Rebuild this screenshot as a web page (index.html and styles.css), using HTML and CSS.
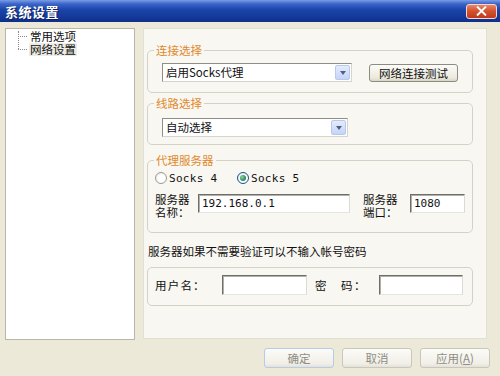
FILE: index.html
```html
<!DOCTYPE html>
<html lang="zh-CN">
<head>
    <meta charset="UTF-8">
    <title>系统设置</title>
    <link rel="stylesheet" href="styles.css">
</head>
<body>
    <div class="window">
        <div class="titlebar">
            <span class="title">系统设置</span>
            <span class="close">
                <svg width="11" height="10" viewBox="0 0 11 10"><path d="M1 0.5 L10 9.5 M10 0.5 L1 9.5" stroke="#fff" stroke-width="1.9"/></svg>
            </span>
        </div>

        <div class="main">
            <div class="tree">
                <div class="nodes">
                    <div class="node"><span class="branch"></span><span class="node-label">常用选项</span></div>
                    <div class="node"><span class="branch"></span><span class="node-label selected">网络设置</span></div>
                </div>
            </div>

            <div class="panel">
                <fieldset class="group g-conn">
                    <legend>连接选择</legend>
                    <div class="row indent">
                        <div class="combo combo-conn">
                            <span class="combo-text">启用Socks代理</span>
                            <span class="combo-btn"><span class="arrow"></span></span>
                        </div>
                        <button class="btn btn-test">网络连接测试</button>
                    </div>
                </fieldset>

                <fieldset class="group g-line">
                    <legend>线路选择</legend>
                    <div class="row indent">
                        <div class="combo combo-line">
                            <span class="combo-text">自动选择</span>
                            <span class="combo-btn"><span class="arrow"></span></span>
                        </div>
                    </div>
                </fieldset>

                <fieldset class="group g-proxy">
                    <legend>代理服务器</legend>
                    <div class="row radios">
                        <label class="radio-item first"><span class="radio"></span>Socks 4</label>
                        <label class="radio-item"><span class="radio checked"></span>Socks 5</label>
                    </div>
                    <div class="row server">
                        <span class="two-line name-label"><span class="line">服务器</span><span class="line">名称：</span></span>
                        <span class="field field-host">192.168.0.1</span>
                        <span class="two-line port-label"><span class="line">服务器</span><span class="line">端口：</span></span>
                        <span class="field field-port">1080</span>
                    </div>
                </fieldset>

                <div class="note">服务器如果不需要验证可以不输入帐号密码</div>

                <fieldset class="group g-auth">
                    <div class="row auth">
                        <span class="user-label">用户名：</span>
                        <span class="field field-user"></span>
                        <span class="pass-label">密　码：</span>
                        <span class="field field-pass"></span>
                    </div>
                </fieldset>
            </div>
        </div>

        <div class="footer">
            <button class="btn btn-foot btn-ok">确定</button>
            <button class="btn btn-foot">取消</button>
            <button class="btn btn-foot">应用(<u>A</u>)</button>
        </div>
    </div>
</body>
</html>
```

FILE: styles.css
```css
* {
    box-sizing: border-box;
}
body {
    margin: 0;
    width: 500px;
    height: 376px;
    overflow: hidden;
    background: #ece9d8;
    font-family: "Noto Sans CJK SC", "DejaVu Sans", sans-serif;
    font-size: 11.5px;
    color: #111;
}
.window {
    width: 500px;
    height: 376px;
    display: flex;
    flex-direction: column;
}

/* title bar */
.titlebar {
    height: 22px;
    display: flex;
    align-items: center;
    justify-content: space-between;
    padding: 0 3px 0 5px;
    background: linear-gradient(#7a9de6 0, #3a64c8 18%, #1b44a8 45%, #143a9a 75%, #0f2f88 100%);
}
.title {
    color: #fff;
    font-weight: bold;
    font-size: 13px;
    letter-spacing: 0.5px;
    text-shadow: 1px 1px 0 #0b1e60;
}
.close {
    width: 31px;
    height: 15px;
    display: flex;
    align-items: center;
    justify-content: center;
    border: 1px solid #f3d8cf;
    border-radius: 3px;
    background: linear-gradient(#e8866a, #d4532f 45%, #c0391b);
}

/* body */
.main {
    height: 318px;
    display: flex;
    padding: 6px 13px 0 5px;
    gap: 8px;
}
.tree {
    width: 130px;
    height: 312px;
    background: #fff;
    border: 1px solid #b9b7a9;
    padding: 1px 0 0 12px;
}
.nodes {
    position: relative;
}
.nodes::before {
    content: "";
    position: absolute;
    left: 0;
    top: 1px;
    height: 18px;
    border-left: 1px dotted #8a8a8a;
}
.node {
    height: 13px;
    display: flex;
    align-items: center;
}
.branch {
    width: 9px;
    border-top: 1px dotted #8a8a8a;
    margin-right: 2px;
}
.node-label {
    display: block;
    height: 13px;
    line-height: 13px;
    padding: 0 1px;
    color: #111;
}
.node-label.selected {
    background: #ecebe4;
}

.panel {
    width: 344px;
    height: 311px;
    background: #f8f7f2;
    border: 1px solid #e2e0d4;
    padding: 14px 13px 0 3px;
}

/* group boxes */
.group {
    margin: 0;
    min-width: 0;
    border: 1px solid #d4d2c4;
    border-radius: 5px;
    padding: 0 6px;
}
.group legend {
    padding: 0 2px;
    line-height: 14px;
    color: #e0892c;
}
.g-conn {
    padding-top: 6px;
    padding-bottom: 10px;
}
.g-line {
    margin-top: 3px;
    padding-top: 8px;
    padding-bottom: 7px;
}
.g-proxy {
    margin-top: 8px;
    padding-top: 3px;
    padding-bottom: 13px;
}
.g-auth {
    margin-top: 9px;
    padding-top: 7px;
    padding-bottom: 10px;
}
.row {
    display: flex;
    align-items: center;
}
.indent {
    padding-left: 8px;
}

/* combo boxes */
.combo {
    height: 19px;
    display: flex;
    align-items: center;
    justify-content: space-between;
    background: #fff;
    border: 1px solid;
    border-color: #8e8e86 #d6d5cc #d6d5cc #8e8e86;
    padding: 0 1px 0 3px;
}
.combo-conn {
    width: 190px;
}
.combo-line {
    width: 186px;
}
.combo-text {
    line-height: 15px;
}
.combo-btn {
    width: 15px;
    height: 15px;
    display: flex;
    align-items: center;
    justify-content: center;
    border: 1px solid #b9c9ee;
    border-radius: 2px;
    background: linear-gradient(#e4ecfd, #c5d4f7);
}
.arrow {
    width: 0;
    height: 0;
    border-left: 3.5px solid transparent;
    border-right: 3.5px solid transparent;
    border-top: 4px solid #4d6185;
}

/* buttons */
.btn {
    font-family: inherit;
    font-size: 11.5px;
    padding: 0;
    border: 1px solid #8e8c80;
    border-radius: 3px;
    background: linear-gradient(#fbfbf8, #ece9de 80%, #d9d6c8);
    color: #111;
}
.btn-test {
    margin-left: 17px;
    width: 89px;
    height: 18px;
    line-height: 14px;
}

/* radios */
.radios {
    height: 16px;
    padding-left: 1px;
}
.radio-item {
    display: flex;
    align-items: center;
    gap: 2px;
    font-family: "DejaVu Sans Mono", monospace;
    font-size: 11px;
    letter-spacing: 0.3px;
}
.radio-item.first {
    width: 82px;
}
.radio {
    width: 12px;
    height: 12px;
    border-radius: 50%;
    border: 1px solid #9a9a92;
    background: radial-gradient(circle at 60% 60%, #fff 40%, #e4e2da);
    display: flex;
    align-items: center;
    justify-content: center;
}
.radio.checked {
    border-color: #1f4f8e;
    background: radial-gradient(circle at 60% 60%, #fff 40%, #d6dce8);
}
.radio.checked::after {
    content: "";
    width: 6px;
    height: 6px;
    border-radius: 50%;
    background: radial-gradient(circle at 35% 35%, #8fd4a8, #2f8f5c 60%, #2a6f8a);
}

/* server row */
.server {
    margin-top: 7px;
    height: 26px;
    align-items: flex-start;
    padding-left: 1px;
}
.two-line {
    display: flex;
    flex-direction: column;
}
.two-line .line {
    display: block;
    height: 13px;
    line-height: 13px;
}
.name-label {
    width: 43px;
}
.port-label {
    width: 47px;
    margin-left: 13px;
}
.field {
    display: block;
    height: 19px;
    margin-top: 1px;
    background: #fff;
    border: 1px solid;
    border-color: #6f6f6a #dcdbd3 #e6e5dd #6f6f6a;
    box-shadow: inset 1px 1px 0 #b0afa8;
    padding: 0 3px;
    line-height: 17px;
    font-family: "DejaVu Sans Mono", monospace;
    font-size: 11px;
}
.field-host {
    width: 152px;
}
.field-port {
    width: 55px;
}

.note {
    margin-top: 11px;
    padding-left: 1px;
    line-height: 14px;
}

/* auth row */
.auth {
    height: 20px;
    padding-left: 1px;
}
.user-label {
    width: 67px;
    letter-spacing: 1.2px;
}
.field-user {
    width: 85px;
    height: 20px;
    margin-top: 0;
}
.pass-label {
    width: 64px;
    margin-left: 8px;
    letter-spacing: 1.5px;
}
.field-pass {
    width: 84px;
    height: 20px;
    margin-top: 0;
}

/* footer */
.footer {
    display: flex;
    justify-content: flex-end;
    gap: 8px;
    padding: 8px 10px 0 0;
}
.btn-foot {
    width: 70px;
    height: 20px;
    color: #8f8d85;
    border-color: #c9c7bb;
    background: linear-gradient(#fbfbf8, #f1efe7 80%, #e4e2d8);
}
.btn-ok {
    border-color: #b8cbe6;
}
```
